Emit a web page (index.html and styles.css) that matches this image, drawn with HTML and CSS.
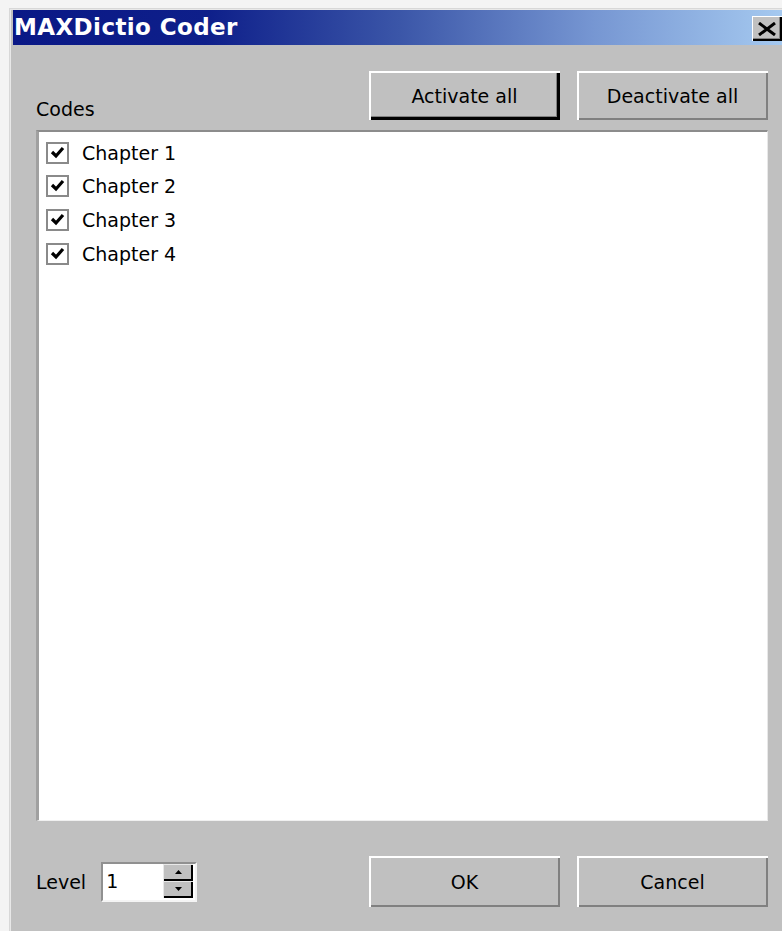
FILE: index.html
```html
<!DOCTYPE html>
<html lang="en">
<head>
<meta charset="utf-8">
<title>MAXDictio Coder</title>
<link rel="stylesheet" href="styles.css">
</head>
<body>
<div class="window">
  <div class="titlebar">
    <span class="title">MAXDictio Coder</span>
    <button class="close" type="button" aria-label="Close">
      <svg width="20" height="14" viewBox="0 0 20 14"><path d="M2 1 L18 13 M18 1 L2 13" stroke="#000" stroke-width="3" fill="none"/></svg>
    </button>
  </div>
  <div class="content">
    <div class="toprow">
      <span class="label">Codes</span>
      <div class="btns">
        <button class="btn btn-default" type="button">Activate all</button>
        <button class="btn" type="button">Deactivate all</button>
      </div>
    </div>
    <div class="list">
      <label class="row"><span class="check"><svg width="19" height="18" viewBox="0 0 19 18"><path d="M4 8 L8 12 L15 4" stroke="#000" stroke-width="3.2" fill="none"/></svg></span>Chapter 1</label>
      <label class="row"><span class="check"><svg width="19" height="18" viewBox="0 0 19 18"><path d="M4 8 L8 12 L15 4" stroke="#000" stroke-width="3.2" fill="none"/></svg></span>Chapter 2</label>
      <label class="row"><span class="check"><svg width="19" height="18" viewBox="0 0 19 18"><path d="M4 8 L8 12 L15 4" stroke="#000" stroke-width="3.2" fill="none"/></svg></span>Chapter 3</label>
      <label class="row"><span class="check"><svg width="19" height="18" viewBox="0 0 19 18"><path d="M4 8 L8 12 L15 4" stroke="#000" stroke-width="3.2" fill="none"/></svg></span>Chapter 4</label>
    </div>
    <div class="bottomrow">
      <div class="level">
        <span class="label">Level</span>
        <div class="spin">
          <span class="spin-value">1</span>
          <div class="spin-btns">
            <span class="spin-btn"><svg width="7" height="4" viewBox="0 0 7 4"><path d="M3.5 0 L7 4 L0 4 Z" fill="#000"/></svg></span>
            <span class="spin-btn"><svg width="7" height="4" viewBox="0 0 7 4"><path d="M0 0 L7 0 L3.5 4 Z" fill="#000"/></svg></span>
          </div>
        </div>
      </div>
      <div class="btns">
        <button class="btn btn-tall" type="button">OK</button>
        <button class="btn btn-tall" type="button">Cancel</button>
      </div>
    </div>
  </div>
</div>
</body>
</html>
```
FILE: styles.css
```css
html, body {
  margin: 0;
  height: 100%;
  overflow: hidden;
}

body {
  background: #f4f4f4;
  padding: 8px 0 0 9px;
  box-sizing: border-box;
  font-family: "DejaVu Sans", Verdana, sans-serif;
  font-size: 19px;
  color: #000;
}

.window {
  width: 800px;
  min-height: 100%;
  background: #c0c0c0;
  padding: 2px 0 0 4px;
  box-sizing: border-box;
  box-shadow: inset 1px 1px 0 #d8d8d8, inset 2px 2px 0 #e8e8e8;
}

.titlebar {
  width: 773px;
  height: 35px;
  display: flex;
  align-items: center;
  background: linear-gradient(to right, #0a1886 0%, #0e1f8a 25%, #3b56a8 50%, #7696d2 75%, #a6caf0 100%);
}

.title {
  color: #fff;
  font-weight: bold;
  font-size: 23px;
  letter-spacing: 0.4px;
  padding-left: 1px;
  line-height: 1;
}

.close {
  margin-left: auto;
  margin-right: 4px;
  margin-top: 2px;
  width: 30px;
  height: 25px;
  padding: 0;
  border: 0;
  background: #c0c0c0;
  display: flex;
  align-items: center;
  justify-content: center;
  box-shadow: inset 1px 1px 0 #fff, inset -2px -2px 0 #000, inset -3px -3px 0 #808080;
}

.content {
  width: 732px;
  padding: 26px 0 0 23px;
}

.toprow {
  display: flex;
  align-items: flex-end;
  justify-content: space-between;
}

.label {
  line-height: 22px;
  padding-bottom: 0;
}

.btns {
  display: flex;
  gap: 17px;
}

.btn {
  width: 191px;
  height: 49px;
  padding: 0;
  border: 0;
  background: #c0c0c0;
  font-family: inherit;
  font-size: 19px;
  color: #000;
  box-shadow: inset 2px 2px 0 #fff, inset -2px -2px 0 #808080;
}

.btn-default {
  box-shadow: inset 2px 2px 0 #fff, inset -3px -3px 0 #000, inset -4px -4px 0 #808080;
}

.btn-tall {
  height: 51px;
}

.list {
  margin-top: 10px;
  height: 691px;
  background: #fff;
  box-sizing: border-box;
  border-top: 2px solid #8c8c8c;
  border-left: 3px solid #a0a0a0;
  border-right: 1px solid #e8e8e8;
  border-bottom: 1px solid #f0f0f0;
  padding: 4px 0 0 7px;
}

.row {
  display: flex;
  align-items: center;
  height: 33.6px;
  gap: 13px;
}

.check {
  width: 23px;
  height: 22px;
  box-sizing: border-box;
  border: 2px solid #8a8a8a;
  background: #fff;
  display: flex;
  align-items: center;
  justify-content: center;
}

.bottomrow {
  margin-top: 35px;
  display: flex;
  align-items: center;
  justify-content: space-between;
}

.level {
  display: flex;
  align-items: center;
  gap: 15px;
}

.spin {
  width: 96px;
  height: 40px;
  box-sizing: border-box;
  background: #fff;
  border-top: 2px solid #909090;
  border-left: 2px solid #909090;
  border-right: 2px solid #f4f4f4;
  border-bottom: 2px solid #f4f4f4;
  display: flex;
  align-items: flex-start;
  padding: 0 2px 0 2px;
}

.spin-value {
  line-height: 34px;
  padding-left: 1px;
}

.spin-btns {
  margin-left: auto;
  width: 30px;
  display: flex;
  flex-direction: column;
}

.spin-btn {
  height: 17px;
  background: #c0c0c0;
  display: flex;
  align-items: center;
  justify-content: center;
  box-shadow: inset 1px 1px 0 #e8e8e8, inset -2px -2px 0 #000;
}
```
